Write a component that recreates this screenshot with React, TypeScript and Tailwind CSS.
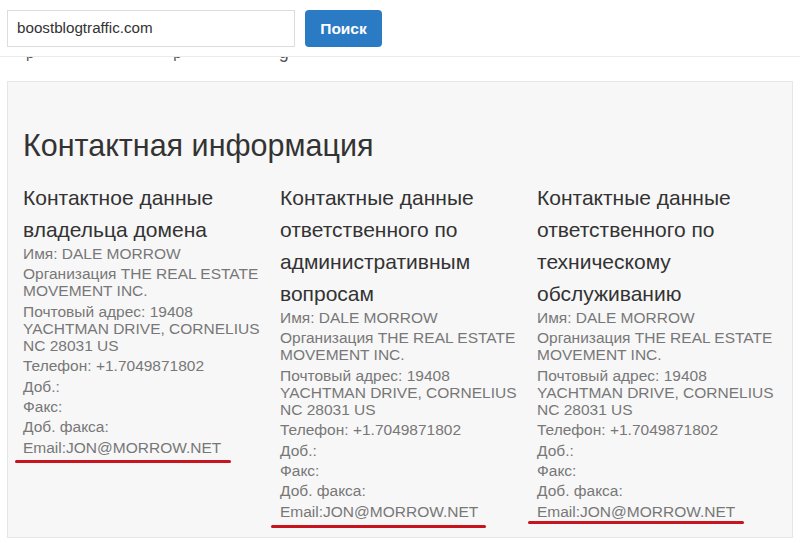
const font = "font-['Liberation_Sans',Arial,sans-serif]";

interface Contact {
  title: string[];
  underline: string;
}

const columns: Contact[] = [
  { title: ["Контактное данные", "владельца домена"], underline: "mt-[4px] ml-[-8px] w-[216px]" },
  { title: ["Контактные данные", "ответственного по", "административным", "вопросам"], underline: "mt-[5px] ml-[-9px] w-[215px]" },
  { title: ["Контактные данные", "ответственного по", "техническому", "обслуживанию"], underline: "mt-[1px] ml-[-9px] w-[216px]" },
];

const rows = [
  ["Имя: DALE MORROW"],
  ["Организация THE REAL ESTATE", "MOVEMENT INC."],
  ["Почтовый адрес: 19408", "YACHTMAN DRIVE, CORNELIUS", "NC 28031 US"],
  ["Телефон: +1.7049871802"],
  ["Доб.:"],
  ["Факс:"],
  ["Доб. факса:"],
  ["Email:JON@MORROW.NET"],
];

function Column({ c }: { c: Contact }) {
  return (
    <div className="flex flex-col">
      <h4 className="text-[21px] leading-[32px] text-[#333]">
        {c.title.map((t) => (
          <div key={t}>{t}</div>
        ))}
      </h4>
      <div className="flex flex-col gap-[3.4px] mt-[-1px] text-[15.5px] leading-[17px] text-[#777]">
        {rows.map((r) => (
          <div key={r[0]}>
            {r.map((l) => (
              <div key={l}>{l}</div>
            ))}
          </div>
        ))}
      </div>
      <div className={`h-[3px] rounded-full bg-[#c8141f] ${c.underline}`} />
    </div>
  );
}

export default function App() {
  return (
    <div className={`w-[800px] h-[546px] bg-white overflow-hidden ${font}`}>
      <header className="h-[57px] border-b border-[#ebebeb] flex items-start gap-[10px] pt-[10px] pl-[7px]">
        <div className="w-[288px] h-[37px] border border-[#dcdcdc] bg-white flex items-center px-[9px] text-[15.2px] text-[#333]">
          boostblogtraffic.com
        </div>
        <button className="w-[77px] h-[37px] rounded-[4px] bg-[#2b7bc4] text-white text-[15.5px] font-bold">
          Поиск
        </button>
      </header>

      {/* line of text scrolled under the fixed header: only descenders show */}
      <div className="h-[6px] overflow-hidden text-[15px] leading-[17px] text-[#555]">
        <div className="flex mt-[-13px]">
          <span className="ml-[26px]">р</span>
          <span className="ml-[139px]">р</span>
          <span className="ml-[97px] text-[18px]">g</span>
        </div>
      </div>

      <section className="mx-[7px] mt-[18px] w-[786px] h-[457px] bg-[#f7f7f7] border border-[#e6e6e6] pt-[46px] pl-[15px]">
        <h3 className="text-[30.5px] leading-[34px] text-[#333] mb-[20px]">Контактная информация</h3>
        <div className="grid grid-cols-[257px_257px_257px]">
          {columns.map((c) => (
            <Column key={c.title.join()} c={c} />
          ))}
        </div>
      </section>
    </div>
  );
}
